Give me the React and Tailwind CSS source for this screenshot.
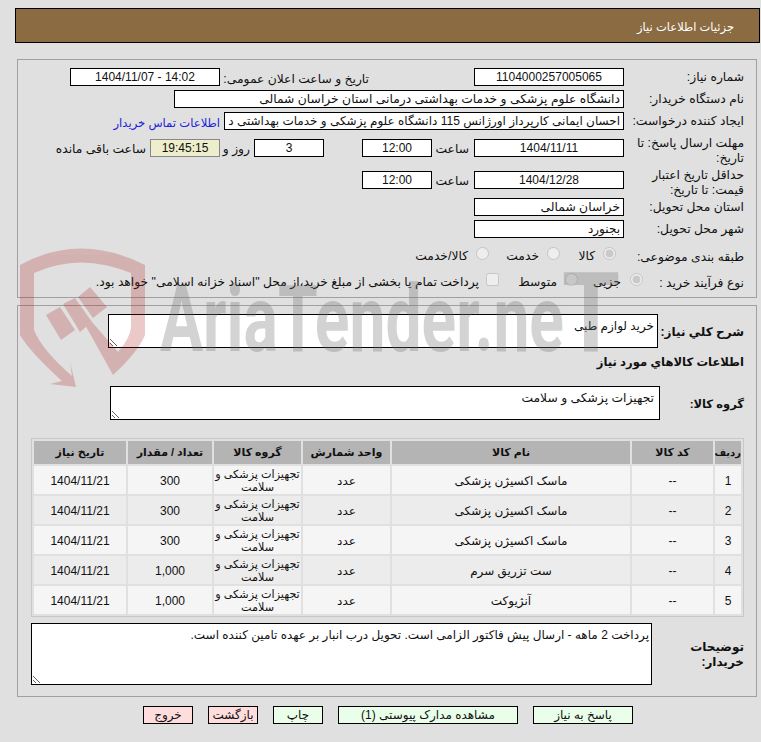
import React from 'react';

const items = [
  { id: 1, name: 'ماسک اکسیژن پزشکی', qty: '300' },
  { id: 2, name: 'ماسک اکسیژن پزشکی', qty: '300' },
  { id: 3, name: 'ماسک اکسیژن پزشکی', qty: '300' },
  { id: 4, name: 'ست تزریق سرم', qty: '1,000' },
  { id: 5, name: 'آنژیوکت', qty: '1,000' },
];

function Box({ className = '', children }) {
  return (
    <div className={`h-[18px] border border-black bg-white leading-[16px] whitespace-nowrap overflow-hidden ${className}`}>
      {children}
    </div>
  );
}

function Label({ children }) {
  return <div className="w-[120px] shrink-0 leading-[15px] pt-[2px] pl-1">{children}</div>;
}

function Choice({ type = 'radio', checked, label, gap = 'mr-[8px]', className = '' }) {
  return (
    <label className={`flex items-center ${className}`}>
      <input type={type} disabled defaultChecked={checked} className="w-[13px] h-[13px] m-0 mb-[6px] shrink-0" />
      <span className={gap}>{label}</span>
    </label>
  );
}

function Watermark() {
  return (
    <svg className="absolute left-0 top-0 pointer-events-none [direction:ltr]" width="761" height="742" viewBox="0 0 761 742">
      <g fill="#a81010" opacity="0.22">
        <path d="M20 265 Q80 232 145 265 L145 335 Q138 352 113 375 L78 312 L92 322 L118 352 Q130 338 131 328 L131 273 Q80 252 34 273 L34 330 Q42 350 72 376 L70 362 L76 387 L50 384 L62 381 Q30 352 20 335 Z" />
        <path d="M46 315 L60 307 L75 330 L61 340 Z" />
        <path d="M78 297 L90 287 L107 307 L93 318 Z" />
        <path d="M63 304 L75 298 L92 322 L80 332 Z" />
      </g>
      <g fontFamily="Roboto, sans-serif" fontWeight="700" fill="#707070" opacity="0.3">
        <text x="160" y="351" className="[direction:ltr]" fontSize="92" textLength="404" lengthAdjust="spacingAndGlyphs">
          AriaTender.ne
        </text>
        <text x="562" y="351" className="[direction:ltr]" fontSize="112" textLength="58" lengthAdjust="spacingAndGlyphs">
          T
        </text>
      </g>
    </svg>
  );
}

export default function App() {
  return (
    <div dir="rtl" className="relative w-[761px] h-[742px] overflow-hidden bg-[#e0e0e0] text-[12.3px] text-[#111] font-['Liberation_Sans','DejaVu_Sans',sans-serif]">
      <div className="pt-[8px] mr-[1px] ml-[15px]">
        <div className="h-[35px] border border-black bg-[#8b6b42] text-white text-[11.5px] leading-[36px] pr-[25px]">جزئیات اطلاعات نیاز</div>
      </div>

      <div className="mt-[16px] mr-[4px] w-[740px] h-[239px] border border-[#a0a0a0] pt-[8px] pr-[12px]">
        <div className="flex h-[22px]">
          <Label>شماره نیاز:</Label>
          <Box className="w-[150px] text-center text-[12px]">1104000257005065</Box>
          <div className="w-[144px] mr-[105px] pt-[2px] shrink-0 whitespace-nowrap">تاریخ و ساعت اعلان عمومی:</div>
          <Box className="w-[150px] mr-[5px] text-center text-[12px]">14:02 - 1404/11/07</Box>
        </div>
        <div className="flex h-[22px]">
          <Label>نام دستگاه خریدار:</Label>
          <Box className="w-[450px] pr-[3px]">دانشگاه علوم پزشکی و خدمات بهداشتی درمانی استان خراسان شمالی</Box>
        </div>
        <div className="flex h-[27px]">
          <Label>ایجاد کننده درخواست:</Label>
          <Box className="w-[400px] pr-[3px] text-[12px]">احسان ایمانی کارپرداز اورژانس 115 دانشگاه علوم پزشکی و خدمات بهداشتی د</Box>
          <a className="mr-[4px] pt-[2px] text-[11.6px] text-[#2222dd] whitespace-nowrap">اطلاعات تماس خریدار</a>
        </div>
        <div className="flex h-[32px]">
          <div className="-mt-[5px]"><Label>مهلت ارسال پاسخ: تا تاریخ:</Label></div>
          <Box className="w-[150px] text-center text-[12px]">1404/11/11</Box>
          <div className="w-[42px] pr-[5px] pt-[1px]">ساعت</div>
          <Box className="w-[70px] text-center text-[12px]">12:00</Box>
          <div className="w-[38px]"></div>
          <Box className="w-[70px] text-center text-[12px]">3</Box>
          <div className="w-[34px] pr-[4px] pt-[1px]">روز و</div>
          <Box className="w-[70px] text-center text-[12px] !bg-[#eeeecc] !border-[#888]">19:45:15</Box>
          <div className="mr-[4px] pt-[1px] whitespace-nowrap">ساعت باقی مانده</div>
        </div>
        <div className="flex h-[27px]">
          <div className="-mt-[5px]"><Label>حداقل تاریخ اعتبار قیمت: تا تاریخ:</Label></div>
          <Box className="w-[150px] text-center text-[12px]">1404/12/28</Box>
          <div className="w-[42px] pr-[5px] pt-[1px]">ساعت</div>
          <Box className="w-[70px] text-center text-[12px]">12:00</Box>
        </div>
        <div className="flex h-[22px]">
          <Label>استان محل تحویل:</Label>
          <Box className="w-[150px] pr-[3px]">خراسان شمالی</Box>
        </div>
        <div className="flex h-[23px]">
          <Label>شهر محل تحویل:</Label>
          <Box className="w-[150px] pr-[3px] text-[12px]">بجنورد</Box>
        </div>
        <div className="flex h-[26px] items-center">
          <Label>طبقه بندی موضوعی:</Label>
          <div className="flex pr-[8px] whitespace-nowrap">
            <Choice checked label="کالا" className="w-[56px]" />
            <Choice label="خدمت" className="w-[71px]" />
            <Choice label="کالا/خدمت" />
          </div>
        </div>
        <div className="flex h-[26px] items-center">
          <Label>نوع فرآیند خرید :</Label>
          <div className="flex -mr-[19px] whitespace-nowrap">
            <Choice checked label="جزیی" gap="mr-[9px]" className="w-[65px]" />
            <Choice label="متوسط" className="w-[79px]" />
            <Choice type="checkbox" gap="mr-[7px]" label="پرداخت تمام یا بخشی از مبلغ خرید،از محل &quot;اسناد خزانه اسلامی&quot; خواهد بود." />
          </div>
        </div>
      </div>

      <div className="mt-[7px] mr-[4px] w-[740px] h-[392px] border border-[#a0a0a0] pt-[8px] pr-[12px] pl-[13px]">
        <div className="flex h-[40px]">
          <div className="w-[86px] shrink-0 font-bold text-[12px] leading-[36px]">شرح کلي نیاز:</div>
          <textarea readOnly defaultValue="خرید لوازم طبی" className="w-[550px] h-[34px] border border-black bg-white py-[2px] pr-[3px] pl-0 text-[12px] block" />
        </div>
        <div className="h-[32px] font-bold text-[11.6px] leading-[16px]">اطلاعات کالاهاي مورد نیاز</div>
        <div className="flex h-[52px]">
          <div className="w-[84px] shrink-0 font-bold text-[11.5px] leading-[36px]">گروه کالا:</div>
          <textarea readOnly defaultValue="تجهیزات پزشکی و سلامت" className="w-[550px] h-[34px] border border-black bg-white px-[5px] py-[2px] block" />
        </div>
        <table className="w-[713px] table-fixed border-separate border-spacing-[2px] border border-[#c8c8c8] text-center text-[12px]">
          <colgroup>
            <col className="w-[26px]" />
            <col className="w-[81px]" />
            <col className="w-[238px]" />
            <col className="w-[87px]" />
            <col className="w-[87px]" />
            <col className="w-[84px]" />
            <col className="w-[92px]" />
          </colgroup>
          <thead>
            <tr className="h-[23px] bg-[#b4b4b4] font-bold text-[11px]">
              <th className="p-0 text-[10px]">ردیف</th>
              <th className="p-0">کد کالا</th>
              <th className="p-0">نام کالا</th>
              <th className="p-0">واحد شمارش</th>
              <th className="p-0">گروه کالا</th>
              <th className="p-0">تعداد / مقدار</th>
              <th className="p-0">تاریخ نیاز</th>
            </tr>
          </thead>
          <tbody>
            {items.map((item) => (
              <tr key={item.id} className={`h-[28px] ${item.id % 2 ? 'bg-[#f5f5f5]' : 'bg-[#ececec]'}`}>
                <td className="p-0 pt-[2px]">{item.id}</td>
                <td className="p-0 pt-[2px]">--</td>
                <td className="p-0 pt-[2px]">{item.name}</td>
                <td className="p-0 pt-[2px]">عدد</td>
                <td className="p-0 pt-[1px] text-[11.2px] leading-[13px] whitespace-nowrap">تجهیزات پزشکی و<br />سلامت</td>
                <td className="p-0 pt-[2px]">{item.qty}</td>
                <td className="p-0 pt-[2px]">1404/11/21</td>
              </tr>
            ))}
          </tbody>
        </table>
        <div className="flex mt-[6px]">
          <div className="w-[92px] shrink-0 font-bold text-[12px] leading-[15px] pt-[17px]">توضیحات خریدار:</div>
          <textarea readOnly defaultValue="پرداخت 2 ماهه - ارسال پیش فاکتور الزامی است. تحویل درب انبار بر عهده تامین کننده است." className="w-[621px] h-[62px] border border-black bg-white p-[2px] text-[12px] block" />
        </div>
      </div>

      <div className="flex mt-[9px] mr-[128px] gap-[15px] text-[12px]">
        <button className="w-[100px] h-[18px] border border-black bg-[#eaffea] leading-[16px]">پاسخ به نیاز</button>
        <button className="w-[180px] h-[18px] border border-black bg-[#eaffea] leading-[16px]">مشاهده مدارک پیوستی (1)</button>
        <button className="w-[50px] h-[18px] border border-black bg-[#eaffea] leading-[16px]">چاپ</button>
        <button className="w-[50px] h-[18px] border border-black bg-[#ffdddd] leading-[16px]">بازگشت</button>
        <button className="w-[50px] h-[18px] border border-black bg-[#ffdddd] leading-[16px]">خروج</button>
      </div>

      <Watermark />
    </div>
  );
}
